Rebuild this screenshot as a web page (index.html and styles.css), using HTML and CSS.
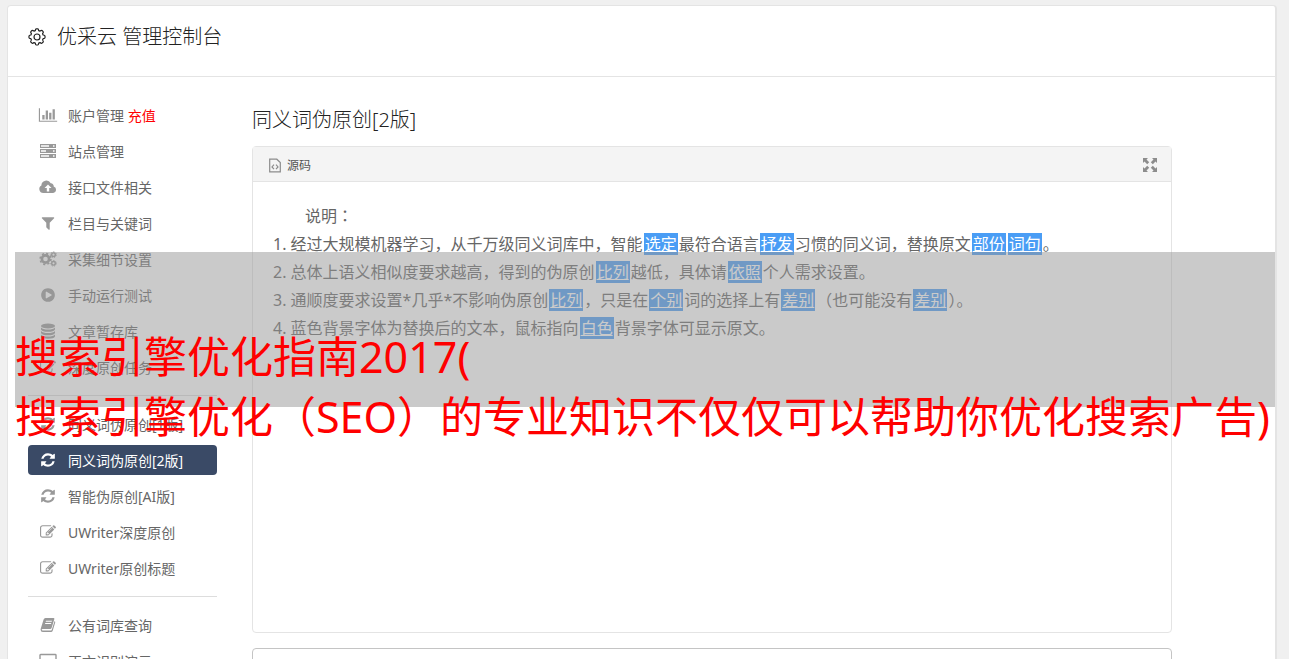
FILE: index.html
```html
<!DOCTYPE html>
<html lang="zh-CN">
<head>
  <meta charset="UTF-8" />
  <title>优采云 管理控制台</title>
  <link rel="stylesheet" href="styles.css">
</head>
<body>
<svg class="sprite" aria-hidden="true">
  <symbol id="i-gear" viewBox="0 0 18 18">
    <path fill="none" stroke="currentColor" stroke-width="1.2" stroke-linejoin="round" d="M7.3 2.6Q7.500.8 8.200.8h1.600q.7 0 .9 1.800l1.300.5q1.500-1.100 2-.6l1.200 1.200q.5.500-.6 2l.5 1.300q1.900.2 1.900.9v1.900q0 .7-1.900.9l-.5 1.300q1.100 1.500.6 2L14 15.200q-.5.500-2-.6l-1.300.5q-.2 1.900-.9 1.900H8.200q-.7 0-.9-1.900L6 14.600q-1.500 1.100-2 .6L2.800 14q-.5-.5.6-2l-.5-1.300Q1 10.500 1 9.800V7.900Q1 7.200 2.900 7l.5-1.300q-1.100-1.500-.6-2L4 2.500q.5-.5 2 .6z"/>
    <circle cx="9" cy="9" r="3" fill="none" stroke="currentColor" stroke-width="1.2"/>
  </symbol>
  <symbol id="i-chart" viewBox="0 0 2048 1792">
    <path d="M640 896v512h-256v-512h256zm384-512v1024h-256v-1024h256zm1024 1152v128h-2048v-1536h128v1408h1920zm-640-896v768h-256v-768h256zm384-384v1152h-256v-1152h256z"/>
  </symbol>
  <symbol id="i-server" viewBox="0 0 18 16">
    <path fill-rule="evenodd" d="M1 1h16v4H1zM2 2.3v1.4h8V2.3zM1 6h16v4H1zM2 7.3v1.4h5V7.3zM1 11h16v4H1zM2 12.3v1.4h8v-1.4zM14 2.3v1.4h1.5V2.3zM14 7.3v1.4h1.5V7.3zM14 12.3v1.4h1.5v-1.4z"/>
  </symbol>
  <symbol id="i-cloud" viewBox="0 0 18 16">
    <path fill-rule="evenodd" d="M4.2 14A4 4 0 0 1 2.4 6.500 4.900 4.900 0 0 1 11.700 4.300 2.800 2.800 0 0 1 14.700 7.400 3.400 3.400 0 0 1 14.200 14zM9 5.500 5.500 9h2.300v3.500h2.400V9h2.300z"/>
  </symbol>
  <symbol id="i-filter" viewBox="0 0 1792 1792">
    <path d="M1595 295q17 41-14 70l-493 493v742q0 42-39 59-13 5-25 5-27 0-45-19l-256-256q-19-19-19-45v-486l-493-493q-31-29-14-70 17-39 59-39h1280q42 0 59 39z"/>
  </symbol>
  <symbol id="i-cogs" viewBox="0 0 18 16">
    <circle cx="6.500" cy="8" r="3.600" fill="none" stroke="currentColor" stroke-width="2.600"/>
    <circle cx="6.500" cy="8" r="5.400" fill="none" stroke="currentColor" stroke-width="1.600" stroke-dasharray="2.120 2.120"/>
    <circle cx="14.500" cy="3.700" r="1.800" fill="none" stroke="currentColor" stroke-width="1.400"/>
    <circle cx="14.500" cy="3.700" r="2.800" fill="none" stroke="currentColor" stroke-width="1" stroke-dasharray="1.260 1.260"/>
    <circle cx="14.500" cy="12.300" r="1.800" fill="none" stroke="currentColor" stroke-width="1.400"/>
    <circle cx="14.500" cy="12.300" r="2.800" fill="none" stroke="currentColor" stroke-width="1" stroke-dasharray="1.260 1.260"/>
  </symbol>
  <symbol id="i-play" viewBox="0 0 1792 1792">
    <path d="M896 128q209 0 385.5 103t279.5 279.5 103 385.5-103 385.5-279.5 279.5-385.5 103-385.5-103-279.5-279.5-103-385.5 103-385.5 279.5-279.5 385.5-103zm384 823q32-18 32-55t-32-55l-544-320q-31-19-64-1-32 19-32 56v640q0 37 32 56 16 8 32 8 17 0 32-9z"/>
  </symbol>
  <symbol id="i-database" viewBox="0 0 16 16">
    <ellipse cx="8" cy="3" rx="7" ry="2.500"/>
    <path d="M1 4.500q2 2 7 2t7-2v2q-1 2.300-7 2.300T1 6.500zM1 8q2 2 7 2t7-2v2q-1 2.300-7 2.300T1 10zM1 11.500q2 2 7 2t7-2v2Q14 15.700 8 15.700T1 13.500z"/>
  </symbol>
  <symbol id="i-edit" viewBox="0 0 1792 1792">
    <path d="M888 1184l116-116-152-152-116 116v56h96v96h56zm440-720q-16-16-33 1l-350 350q-17 17-1 33t33-1l350-350q17-17 1-33zm80 594v190q0 119-84.500 203.500t-203.500 84.500h-832q-119 0-203.500-84.500t-84.500-203.500v-832q0-119 84.500-203.500t203.500-84.500h832q63 0 117 25 15 7 18 23 3 17-9 29l-49 49q-14 14-32 8-23-6-45-6h-832q-66 0-113 47t-47 113v832q0 66 47 113t113 47h832q66 0 113-47t47-113v-126q0-13 9-22l64-64q15-15 35-7t20 29zm-96-738l288 288-672 672h-288v-288zm444 132l-92 92-288-288 92-92q28-28 68-28t68 28l152 152q28 28 28 68t-28 68z"/>
  </symbol>
  <symbol id="i-refresh" viewBox="0 0 1792 1792">
    <path d="M1639 1056q0 5-1 7-64 268-268 434.500t-478 166.500q-146 0-282.500-55t-243.500-157l-129 129q-19 19-45 19t-45-19-19-45v-448q0-26 19-45t45-19h448q26 0 45 19t19 45-19 45l-137 137q71 66 161 102t187 36q134 0 250-65t186-179q11-17 53-117 8-23 30-23h192q13 0 22.500 9.500t9.500 22.500zm25-800v448q0 26-19 45t-45 19h-448q-26 0-45-19t-19-45 19-45l138-138q-148-137-349-137-134 0-250 65t-186 179q-11 17-53 117-8 23-30 23h-199q-13 0-22.500-9.500t-9.500-22.500v-7q65-268 270-434.500t480-166.500q146 0 284 55.500t245 156.500l130-129q19-19 45-19t45 19 19 45z"/>
  </symbol>
  <symbol id="i-book" viewBox="0 0 16 16">
    <path fill-rule="evenodd" d="M5.500 1h8q1.200 0 .8 1.300L11.600 11q-.4 1-1.400 1H2.600q-.9 0-.9.700t1.100.7h8.300q.5 0 .7-.6L14.600 4q.9.500.6 1.500l-2.500 8.200q-.4 1.300-1.700 1.300H2.800Q.7 15 .6 12.800q-.1-.6.200-1.400L3.600 2.500Q4.100 1 5.500 1zM6 3.800l-.3.900h6l.3-.9zM5.300 6l-.3.900h6l.3-.9z"/>
  </symbol>
  <symbol id="i-laptop" viewBox="0 0 18 16">
    <path fill="none" stroke="currentColor" stroke-width="1.400" d="M1 2.200q0-.7.700-.7h14.600q.7 0 .7.700v9.600H1z"/>
    <path d="M0 13h18v2H0z"/>
  </symbol>
  <symbol id="i-code" viewBox="0 0 12 15">
    <path fill="none" stroke="currentColor" stroke-width="1.200" d="M.7 1.200h7.100l3.500 3.300v9.300H.7zM5 6.700 3 8.900l2 2.200M7 6.700l2 2.200-2 2.200"/>
  </symbol>
  <symbol id="i-expand" viewBox="0 0 14 14">
    <path d="M0 0h5L3.500 1.500l2.700 2.700-2 2L1.500 3.500 0 5zM14 0v5l-1.500-1.500-2.700 2.700-2-2 2.700-2.700L9 0zM0 14V9l1.500 1.500 2.700-2.700 2 2-2.700 2.700L5 14zM14 14H9l1.500-1.500-2.700-2.700 2-2 2.700 2.700L14 9z"/>
  </symbol>
</svg>

<div class="card">
  <header class="top">
    <svg class="gear"><use href="#i-gear"/></svg>
    <h1>优采云 管理控制台</h1>
  </header>

  <div class="content">
    <nav class="menu">
      <a href="#"><svg><use href="#i-chart"/></svg><span>账户管理 <em>充值</em></span></a>
      <a href="#"><svg><use href="#i-server"/></svg>站点管理</a>
      <a href="#"><svg><use href="#i-cloud"/></svg>接口文件相关</a>
      <a href="#"><svg><use href="#i-filter"/></svg>栏目与关键词</a>
      <a href="#"><svg><use href="#i-cogs"/></svg>采集细节设置</a>
      <a href="#"><svg><use href="#i-play"/></svg>手动运行测试</a>
      <a href="#"><svg><use href="#i-database"/></svg>文章暂存库</a>
      <a href="#"><svg><use href="#i-edit"/></svg>深度原创任务</a>
      <hr>
      <a href="#"><svg><use href="#i-refresh"/></svg>同义词伪原创[1版]</a>
      <a href="#" class="active"><svg><use href="#i-refresh"/></svg>同义词伪原创[2版]</a>
      <a href="#"><svg><use href="#i-refresh"/></svg>智能伪原创[AI版]</a>
      <a href="#"><svg><use href="#i-edit"/></svg>UWriter深度原创</a>
      <a href="#"><svg><use href="#i-edit"/></svg>UWriter原创标题</a>
      <hr>
      <a href="#"><svg><use href="#i-book"/></svg>公有词库查询</a>
      <a href="#"><svg><use href="#i-laptop"/></svg>正文识别演示</a>
    </nav>

    <main class="main">
      <h2>同义词伪原创[2版]</h2>
      <section class="editor">
        <div class="toolbar">
          <button type="button"><svg class="code"><use href="#i-code"/></svg>源码</button>
          <button type="button" aria-label="全屏"><svg class="expand"><use href="#i-expand"/></svg></button>
        </div>
        <div class="text">
          <p>说明<span class="punct" lang="zh-TW">：</span></p>
          <ol>
            <li>经过大规模机器学习，从千万级同义词库中，智能<u>选定</u>最符合语言<u>抒发</u>习惯的同义词，替换原文<u>部份</u><u>词句</u>。</li>
            <li>总体上语义相似度要求越高，得到的伪原创<u>比列</u>越低，具体请<u>依照</u>个人需求设置。</li>
            <li>通顺度要求设置*几乎*不影响伪原创<u>比列</u>，只是在<u>个别</u>词的选择上有<u>差别</u><span class="punct" lang="zh-TW">（</span>也可能没有<u>差别</u><span class="punct" lang="zh-TW">）</span>。</li>
            <li>蓝色背景字体为替换后的文本，鼠标指向<u>白色</u>背景字体可显示原文。</li>
          </ol>
        </div>
      </section>
      <textarea class="source" rows="6" aria-label="原文"></textarea>
    </main>
  </div>
</div>

<div class="banner">搜索引擎优化指南2017(<br>搜索引擎优化<span class="punct" lang="zh-TW">（</span>SEO<span class="punct" lang="zh-TW">）</span>的专业知识不仅仅可以帮助你优化搜索广告)</div>
</body>
</html>
```

FILE: styles.css
```css
* {
  box-sizing: border-box;
}
body {
  margin: 0;
  padding: 5px 12px 0 7px;
  height: 100vh;
  overflow: hidden;
  position: relative;
  background: #f0f0f0;
  color: #222;
  font-family: "Noto Sans", "Noto Sans CJK SC", sans-serif;
}
svg {
  fill: currentColor;
  flex: none;
}
.sprite {
  display: none;
}
h1, h2 {
  margin: 0;
  font-size: 20px;
  font-weight: 300;
  line-height: 28px;
}
/* 全角标点居中 */
.punct {
  font-family: "Noto Sans CJK TC", sans-serif;
  line-height: 1;
}
.card {
  min-height: 100vh;
  background: white;
  border: 1px solid #e4e4e4;
  border-right-width: 2px;
  border-radius: 4px;
}
.top {
  display: flex;
  align-items: center;
  padding: 17px 20px 25px;
  border-bottom: 1px solid #e4e4e4;
}
.gear {
  width: 18px;
  height: 18px;
  margin-right: 11px;
}
.content {
  display: flex;
  align-items: flex-start;
  gap: 35px;
  padding: 23px 103px 20px 20px;
}

/* 左侧菜单 */
.menu {
  flex: none;
  width: 189px;
  display: flex;
  flex-direction: column;
  gap: 6px;
}
.menu a {
  display: flex;
  align-items: center;
  height: 30px;
  padding: 0 0 1px 10px;
  border-radius: 4px;
  color: #666;
  font-size: 14px;
  text-decoration: none;
}
.menu svg {
  width: 20px;
  height: 16px;
  margin-right: 10px;
  color: #999;
}
.menu em {
  color: red;
  font-style: normal;
}
.menu .active,
.menu .active svg {
  color: white;
}
.menu .active {
  background: #3a4a66;
}
.menu hr {
  width: 100%;
  margin: 7px 0;
  border: 0;
  border-top: 1px solid #ddd;
}

/* 编辑区 */
.main {
  flex: 1;
  min-width: 0;
}
.main h2 {
  margin: 6px 0 12px;
}
.editor {
  border: 1px solid #e4e4e4;
  border-radius: 4px;
}
.toolbar {
  display: flex;
  justify-content: space-between;
  align-items: center;
  height: 35px;
  padding: 2px 14px 0 16px;
  background: #f4f4f4;
  border-bottom: 1px solid #e4e4e4;
}
.toolbar button {
  display: flex;
  align-items: center;
  padding: 0;
  border: 0;
  background: none;
  color: #555;
  font: inherit;
  font-size: 12px;
}
.toolbar svg {
  color: #8c8c8c;
}
.code {
  width: 12px;
  height: 15px;
  margin-right: 6px;
}
.expand {
  width: 14px;
  height: 14px;
}
.text {
  min-height: 450px;
  padding: 20px;
  color: #666;
  font-size: 16px;
  line-height: 28px;
}
.text p {
  margin: 0;
  text-indent: 2em;
}
.text ol {
  margin: 0;
  padding: 0;
  list-style-position: inside;
}
.text u {
  margin: 0 1px;
  padding: 0 1px;
  background: #4a9df5;
  color: white;
}
.source {
  display: block;
  width: 100%;
  margin-top: 15px;
  border: 1px solid #c4c4c4;
  border-radius: 4px;
  resize: none;
}

/* 标题横幅 */
.banner {
  position: absolute;
  top: 252px;
  left: 15px;
  right: 14px;
  height: 155px;
  padding-top: 75px;
  background: rgba(150, 150, 150, 0.5);
  color: red;
  font-size: 43px;
  line-height: 60px;
  white-space: nowrap;
}
```
